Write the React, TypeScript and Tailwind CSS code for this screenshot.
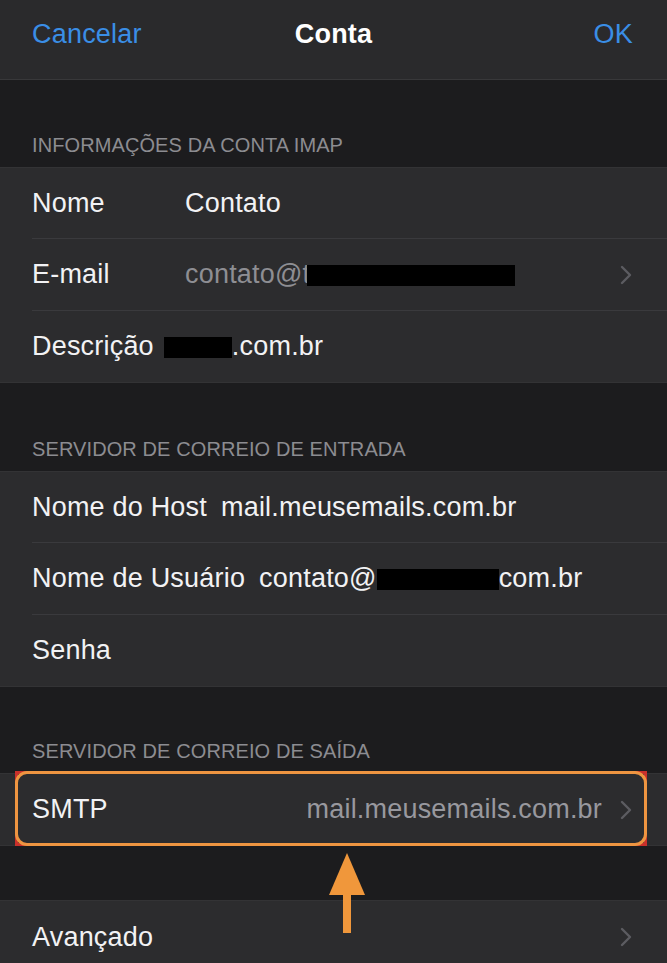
const Chevron = () => (
  <svg width="12" height="20" viewBox="0 0 12 20" fill="none" className="shrink-0">
    <path d="M2 2l8 8-8 8" stroke="#5c5c61" strokeWidth="2.4" strokeLinecap="round" strokeLinejoin="round" />
  </svg>
);

const Redact = ({ w }: { w: number }) => (
  <span className="inline-block h-[21px] bg-black align-[-3px]" style={{ width: w }} />
);

const SectionHeader = ({ title, h }: { title: string; h: string }) => (
  <div className={`${h} flex items-end pb-[7px] pl-[32px] text-[20px] tracking-[0.1px] text-[#8c8c91]`}>
    {title}
  </div>
);

const Row = ({
  children,
  last,
  h = "h-[71px]",
}: {
  children: React.ReactNode;
  last?: boolean;
  h?: string;
}) => (
  <div className="bg-[#2c2c2e] pl-[32px]">
    <div
      className={`${h} flex items-center pr-[35px] ${last ? "" : "border-b border-[#3a3a3d]"}`}
    >
      {children}
    </div>
  </div>
);

export default function App() {
  return (
    <div
      className="relative min-h-[963px] w-[667px] overflow-hidden bg-[#1c1c1e] text-[27px] tracking-[0.2px] text-[#f2f2f4]"
      style={{ fontFamily: '"Liberation Sans", Arial, sans-serif' }}
    >
      {/* nav bar */}
      <div className="grid h-[80px] grid-cols-3 items-center border-b border-[#38383a] bg-[#2a2a2c] px-[32px] pb-[10px]">
        <span className="text-[#3a8ee6]">Cancelar</span>
        <span className="text-center font-bold text-white">Conta</span>
        <span className="pr-[2px] text-right text-[#3a8ee6]">OK</span>
      </div>

      <SectionHeader title="INFORMAÇÕES DA CONTA IMAP" h="h-[87px]" />
      <div className="border-y border-[#333335]">
        <Row>
          <span className="w-[145px] shrink-0">Nome</span>
          <span className="ml-[8px]">Contato</span>
        </Row>
        <Row h="h-[72px]">
          <span className="w-[145px] shrink-0">E-mail</span>
          <span className="ml-[8px] flex-1 text-[#8e8e93]">
            contato@t
            <span className="-ml-[3px]">
              <Redact w={208} />
            </span>
          </span>
          <Chevron />
        </Row>
        <Row last>
          <span className="shrink-0">Descrição</span>
          <span className="ml-[10px]">
            <Redact w={68} />
            .com.br
          </span>
        </Row>
      </div>

      <SectionHeader title="SERVIDOR DE CORREIO DE ENTRADA" h="h-[88px]" />
      <div className="border-y border-[#333335]">
        <Row>
          <span>Nome do Host</span>
          <span className="ml-[14px]">mail.meusemails.com.br</span>
        </Row>
        <Row h="h-[72px]">
          <span>Nome de Usuário</span>
          <span className="ml-[14px]">
            contato@
            <Redact w={122} />
            com.br
          </span>
        </Row>
        <Row last>
          <span>Senha</span>
        </Row>
      </div>

      <SectionHeader title="SERVIDOR DE CORREIO DE SAÍDA" h="h-[86px]" />
      <div className="relative border-y border-[#333335]">
        <Row last h="h-[71px]">
          <span className="flex-1">SMTP</span>
          <span className="mr-[18px] text-[#98989e]">mail.meusemails.com.br</span>
          <Chevron />
        </Row>
        {/* highlight box */}
        <div className="pointer-events-none absolute -top-[3px] -bottom-[1px] left-[15px] right-[20px] border-[3px] border-[#c9302b]">
          <div className="absolute -inset-[3px] rounded-[12px] border-[3px] border-[#ee9541]" />
        </div>
      </div>

      <div className="h-[54px]" />
      <div className="border-t border-[#333335]">
        <Row last h="h-[72px]">
          <span className="flex-1">Avançado</span>
          <Chevron />
        </Row>
      </div>

      {/* arrow pointing at SMTP */}
      <svg
        className="absolute left-[328px] top-[852px]"
        width="38"
        height="82"
        viewBox="0 0 38 82"
        fill="#f0973b"
      >
        <path d="M19 1L37 43H1z" />
        <rect x="15" y="40" width="8" height="41" />
      </svg>
    </div>
  );
}
